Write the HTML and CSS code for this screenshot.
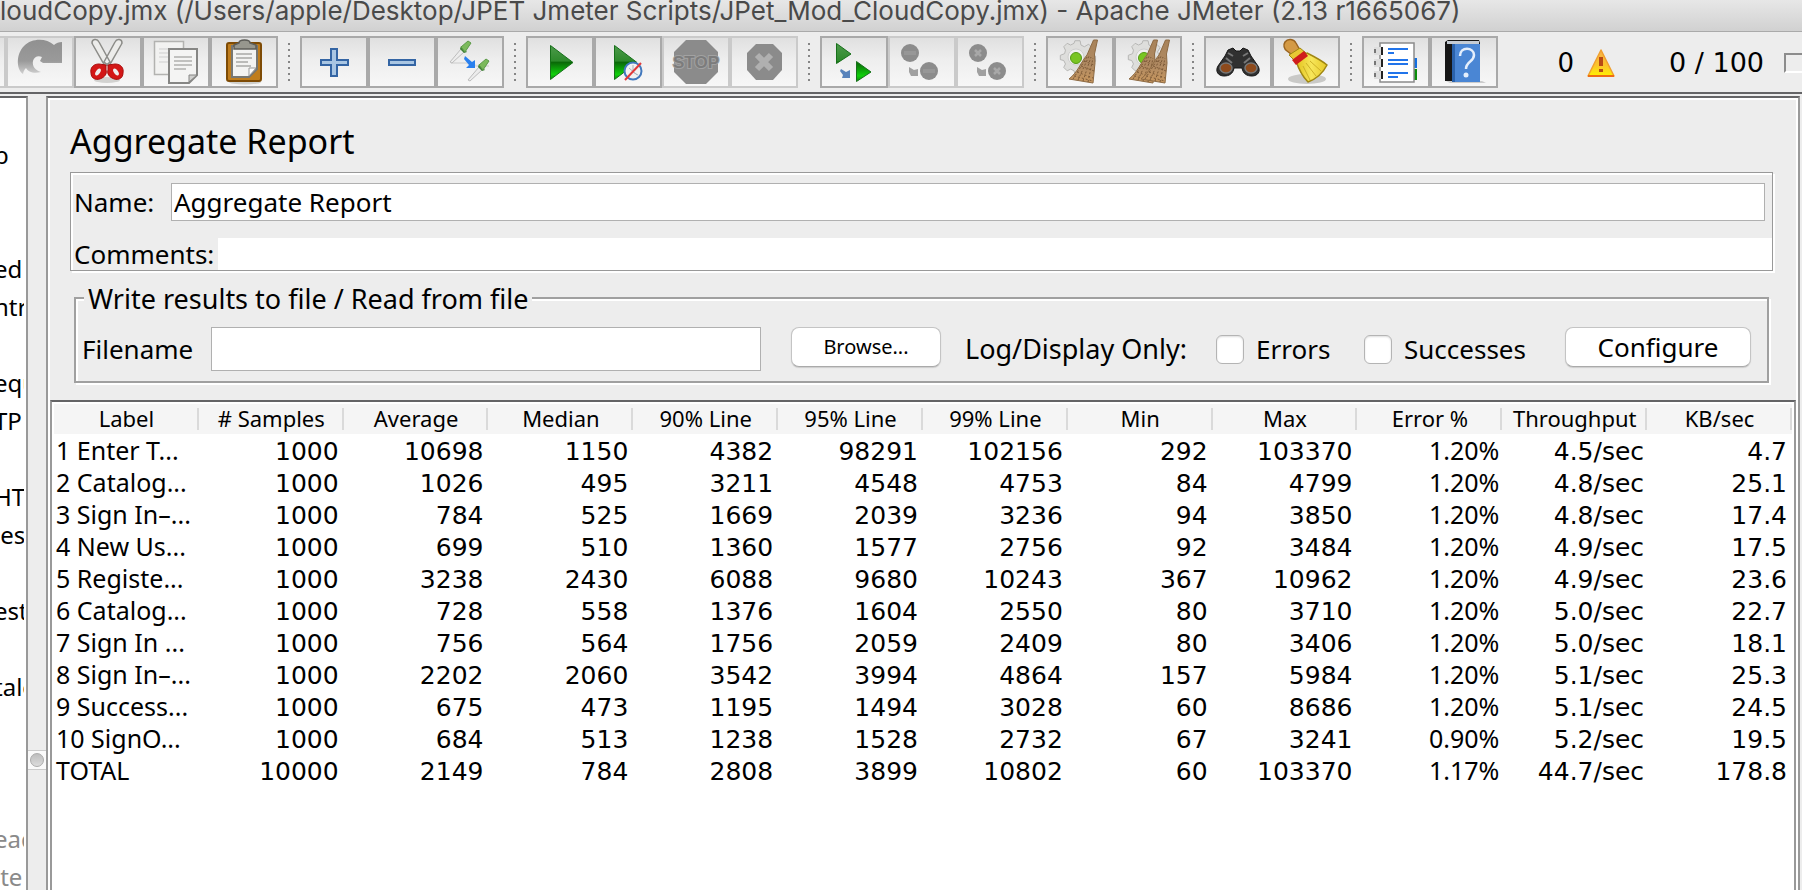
FILE: index.html
```html
<!DOCTYPE html>
<html lang="en">
<head>
<meta charset="utf-8">
<title>Apache JMeter (2.13 r1665067)</title>
<link rel="stylesheet" href="styles.css">
</head>
<body>
<svg class="defs" aria-hidden="true">
  <defs>
    <linearGradient id="green" x1="0" y1="0" x2="0" y2="1"><stop offset="0" stop-color="#4d9a4b"/><stop offset=".45" stop-color="#2e8a2c"/><stop offset=".5" stop-color="#0a6a08"/><stop offset=".85" stop-color="#0fd00b"/><stop offset="1" stop-color="#0a8a08"/></linearGradient>
    <linearGradient id="straw" x1="0" y1="0" x2="0" y2="1"><stop offset="0" stop-color="#a8835a"/><stop offset=".6" stop-color="#b08a62"/><stop offset="1" stop-color="#c9985f"/></linearGradient>
    <linearGradient id="warn" x1="0" y1="0" x2="0" y2="1"><stop offset="0" stop-color="#f9b04a"/><stop offset=".6" stop-color="#fbc52a"/><stop offset="1" stop-color="#fff200"/></linearGradient>
    <linearGradient id="fade" x1="0" y1="0" x2="0" y2="1"><stop offset="0" stop-color="#909090"/><stop offset=".6" stop-color="#9a9a9a"/><stop offset="1" stop-color="#d4d4d4"/></linearGradient>
    <linearGradient id="gold" x1="0" y1="0" x2="1" y2="0"><stop offset="0" stop-color="#e2c21c"/><stop offset=".5" stop-color="#f7e65a"/><stop offset="1" stop-color="#e6c826"/></linearGradient>
    <g id="gear"><path d="M22 2h6l1 5 4 2 5-3 4 4-3 5 2 4 5 1v6l-5 1-2 4 3 5-4 3-5-3-4 2-1 3h-6l-1-4-4-2-4 2-4-4 2-4-2-4-4-1v-5l5-2 1-4-2-4 4-4 4 2 4-2z" transform="translate(0 1) scale(.86)" fill="#dededc" stroke="#b0b0ae" stroke-width="1"/><circle cx="20" cy="19" r="8" fill="#f0f0ee" stroke="#cfcfcf"/><circle cx="20" cy="20" r="5.500" fill="#79c522" stroke="#559a14"/></g>
    <g id="brush"><path d="M45.500 2h4L46.500 16l.5 9-2 20-24-4c9-7 12-17 18-24z" fill="url(#straw)" stroke="#8d6a43" stroke-width="1"/><path d="M25 41l14-22M30 42l11-24M35 43l8-24M40 44l5-24M29 34l16 6M33 28l13 5M26 38l19 5M36 23l10 4" stroke="#7c5a38" stroke-width="1" stroke-dasharray="2 2" fill="none"/></g>
    <g id="dropper"><path d="M1 22L12 9l3 3L3 23z" fill="#ececec" stroke="#bdbdbd" stroke-width="1"/><path d="M12 6l6 6 -3 1-4-4z" fill="#3f7f35"/><path d="M12 7l7-6 3 2-6 9z" fill="#7cba5c" stroke="#5c9a48" stroke-width="1"/></g>
  </defs>
</svg>

<header class="titlebar"><h1 class="window-title">loudCopy.jmx (/Users/apple/Desktop/JPET Jmeter Scripts/JPet_Mod_CloudCopy.jmx) - Apache JMeter (2.13 r1665067)</h1></header>

<div class="toolbar" role="toolbar">
  <div class="tool-groups">
    <div class="tools">
      <button class="tool" disabled aria-label="Undo"></button>
      <button class="tool" disabled aria-label="Redo"><svg viewBox="0 0 64 48"><path d="M15 36C8 31 8 16 16 8 24 0 38 0 46 7c2-2 5-3 8-3v21H35l-3-2 2-4c-4-2-8 0-9 4-1 5 2 9 8 11-7 2-13 0-15-4-2 2-3 4-3 7z" fill="url(#fade)"/></svg></button>
      <button class="tool" aria-label="Cut"><svg viewBox="0 0 64 48"><ellipse cx="31" cy="42" rx="13" ry="3" fill="#d2d2d0"/><path d="M16 5c0-4 5-5 7-1l11 20-5 4-12-21zM46 5c0-4-5-5-7-1L28 24l5 4L45 7z" fill="#ececea" stroke="#8c8c88" stroke-width="1.500"/><path d="M30 27l-7-1c-6 0-9 4-8 9 0 6 6 8 11 5 4-2 5-6 4-8zM32 27l7-1c6 0 9 4 8 9 0 6-6 8-11 5-4-2-5-6-4-8z" fill="#d31717" stroke="#a90d0d"/><ellipse cx="22" cy="34" rx="2" ry="4" transform="rotate(35 22 34)" fill="#eee"/><ellipse cx="40" cy="34" rx="2" ry="4" transform="rotate(-35 40 34)" fill="#eee"/></svg></button>
      <button class="tool" aria-label="Copy"><svg viewBox="0 0 64 48"><path d="M10.500 3.500h29v33h-29z" fill="#f2f2f1" stroke="#b2b2b0" stroke-width="1.500"/><path d="M15 11h18M15 15h18M15 19h14M15 24h14" stroke="#cfcfcf"/><path d="M25 11h28v26l-8 8H25z" fill="#f4f4f3" stroke="#868684" stroke-width="2"/><path d="M30 19h18M30 23h18M30 27h18M30 31h12" stroke="#b0b0ae" stroke-width="1.500"/><path d="M45 44v-7h8z" fill="#d0d0ce" stroke="#868684"/></svg></button>
      <button class="tool" aria-label="Paste"><svg viewBox="0 0 64 48"><ellipse cx="33" cy="44" rx="16" ry="2.500" fill="#cfcfcc"/><rect x="15" y="5" width="34" height="38" rx="2" fill="#c07d1d" stroke="#7e4b05" stroke-width="2"/><path d="M20 8h25v23l-8 8H20z" fill="#f3f3f2" stroke="#777773" stroke-width="2"/><path d="M24 16h16M24 20h16M24 24h12M24 28h15" stroke="#a9a9a7" stroke-width="1.500"/><path d="M37 38v-8h7z" fill="#fff" stroke="#999"/><path d="M22 11V7l5-2c0-4 11-4 11 0l6 2v4z" fill="#97978e" stroke="#5d5d58" stroke-width="1.500"/></svg></button>
    </div>
    <span class="dots"></span>
    <div class="tools">
      <button class="tool" aria-label="Expand all"><svg viewBox="0 0 64 48"><path d="M29 11h6v11h11v5H35v11h-6V27H19v-5h10z" fill="#a9c6e3" stroke="#3465a4" stroke-width="2"/></svg></button>
      <button class="tool" aria-label="Collapse all"><svg viewBox="0 0 64 48"><rect x="19" y="22" width="26" height="5" fill="#a9c6e3" stroke="#3465a4" stroke-width="2"/></svg></button>
      <button class="tool" aria-label="Toggle"><svg viewBox="0 0 64 48"><path d="M13 25h16l10 3h12" stroke="#ddd" stroke-width="2" fill="none"/><use href="#dropper" x="11" y="2"/><use href="#dropper" x="29" y="20"/><path d="M27 18l7 6 3-2v8h-9l3-3-5-6z" fill="#2a80ee"/></svg></button>
    </div>
    <span class="dots"></span>
    <div class="tools">
      <button class="tool" aria-label="Start"><svg viewBox="0 0 64 48"><path d="M22.500 7.500v34L45 24.500z" fill="url(#green)" stroke="#17701a"/></svg></button>
      <button class="tool" aria-label="Start no pauses"><svg viewBox="0 0 64 48"><path d="M18.500 7.500v34L41 24.500z" fill="url(#green)" stroke="#17701a"/><circle cx="37" cy="33" r="8.500" fill="#f2f2f2" stroke="#4178bd" stroke-width="2"/><path d="M37 27v7l5 3M33 30l8 7" stroke="#aab4c0" fill="none"/><path d="M29 42l16-17" stroke="#e23a3a" stroke-width="2"/></svg></button>
      <button class="tool" disabled aria-label="Stop"><svg viewBox="0 0 64 48"><path d="M22 2h20l12 12v20L42 46H22L10 34V14z" fill="#8b8b8b"/><text x="32" y="30" class="stop-text">STOP</text></svg></button>
      <button class="tool" disabled aria-label="Shutdown"><svg viewBox="0 0 64 48"><path d="M24 6h17l9 9v17l-9 10H24l-9-10V15z" fill="#8b8b8b"/><path d="M25 17l14 14M39 17L25 31" stroke="#b0b0b0" stroke-width="6"/></svg></button>
    </div>
    <span class="dots"></span>
    <div class="tools">
      <button class="tool" aria-label="Remote start all"><svg viewBox="0 0 64 48"><path d="M14.500 5.500v20L29 16zM34.500 23.500v20L49 34z" fill="url(#green)" stroke="#17701a"/><path d="M19 31l5 3 4-2v8h-8l1-3-3-4z" fill="#3c6eb0" opacity=".85"/></svg></button>
      <button class="tool" disabled aria-label="Remote stop all"><svg viewBox="0 0 64 48"><circle cx="20" cy="15" r="9" fill="#8c8c8c"/><circle cx="39" cy="33" r="9" fill="#8c8c8c"/><path d="M14 15h12M33 33h12" stroke="#979797" stroke-width="4"/><path d="M19 29l5 3 4-1v7h-7l-2-4z" fill="#a0a0a0"/></svg></button>
      <button class="tool" disabled aria-label="Remote shutdown all"><svg viewBox="0 0 64 48"><circle cx="20" cy="15" r="9" fill="#8c8c8c"/><circle cx="39" cy="33" r="9" fill="#8c8c8c"/><path d="M17 12l6 6M23 12l-6 6M36 30l6 6M42 30l-6 6" stroke="#a8a8a8" stroke-width="2.500"/><path d="M19 29l5 3 4-1v7h-7l-2-4z" fill="#a0a0a0"/></svg></button>
    </div>
    <span class="dots"></span>
    <div class="tools">
      <button class="tool" aria-label="Clear"><svg viewBox="0 0 64 48"><use href="#gear" x="8"/><use href="#brush"/></svg></button>
      <button class="tool" aria-label="Clear all"><svg viewBox="0 0 64 48"><use href="#gear" x="8"/><use href="#brush" x="-8"/><use href="#brush" x="4"/></svg></button>
    </div>
    <span class="dots"></span>
    <div class="tools">
      <button class="tool" aria-label="Search"><svg viewBox="0 0 64 48"><path d="M22 12l5-2 3 3h4l3-3 5 2 3 6 7 10c3 5 0 10-6 10-5 0-9-2-10-8h-8c-1 6-5 8-10 8-6 0-9-5-6-10l7-10z" fill="#303030" stroke="#161616"/><path d="M22 15l5 3M42 15l-5 3M20 20l6 5M44 20l-6 5" stroke="#777" stroke-width="2"/><ellipse cx="20" cy="30" rx="6" ry="5" fill="#8d4a1c" stroke="#777" stroke-width="1.500"/><ellipse cx="45" cy="30" rx="6" ry="5" fill="#8d4a1c" stroke="#777" stroke-width="1.500"/></svg></button>
      <button class="tool" aria-label="Reset search"><svg viewBox="0 0 64 48"><ellipse cx="33" cy="41" rx="19" ry="5" fill="#c9c9c7"/><path d="M11 4c3-4 9-3 11 1l5 9-6 5-8-6c-3-2-4-6-2-9z" fill="#d49a45" stroke="#9a6420" stroke-width="1.500"/><path d="M15 17l11-7 6 5-10 9z" fill="#e8c834" stroke="#a08712"/><path d="M22 23l11-8c8 4 14 7 20 12-4 8-11 14-19 17-5-5-9-12-12-21z" fill="url(#gold)" stroke="#a08712" stroke-width="1.500"/><path d="M29 28l7 14M32 25l10 13M36 23l11 10" stroke="#cdb127"/><path d="M18 22l12-9 4 5-12 9z" fill="#cf1c1c"/></svg></button>
    </div>
    <span class="dots"></span>
    <div class="tools">
      <button class="tool" aria-label="Function helper"><svg viewBox="0 0 64 48"><path d="M48 20h5v10h-5z" fill="#1670e0"/><path d="M48 31h5v11h-5z" fill="#0b8d0b"/><rect x="16" y="5" width="34" height="39" fill="#fff" stroke="#8b8b8b" stroke-width="1.500"/><path d="M24 11h20M24 22h20M24 26h20M24 35h20" stroke="#2174ea" stroke-width="2"/><path d="M24 15h6M24 39h10" stroke="#2174ea" stroke-width="2"/><path d="M10 9h8v8h-8zM10 21h8v8h-8zM10 33h8v8h-8z" fill="#ddd"/><path d="M11 11v4M11 23v4M11 35v4" stroke="#777" stroke-width="2"/><path d="M18 9v8M18 21v8M18 33v8" stroke="#222" stroke-width="2"/></svg></button>
      <button class="tool" aria-label="Help"><svg viewBox="0 0 64 48"><path d="M14 43h36l4 2H18z" fill="#ccc"/><path d="M13 4l3-2h31l1 3v38H13z" fill="#161616"/><path d="M15 3h32v3H15z" fill="#c5ccd4"/><path d="M20 6h28v38H20z" fill="#4a86d4"/><path d="M20 6h3v38h-3z" fill="#2b62ab"/><path d="M28 18c0-10 14-9 14-1 0 7-8 6-8 14" stroke="#e5effc" stroke-width="2.500" fill="none"/><circle cx="34" cy="37" r="2.500" fill="#e5effc"/></svg></button>
    </div>
  </div>
  <div class="status">
    <span class="errors">0</span>
    <svg class="warning" viewBox="0 0 28 28"><path d="M14 1l13 26H1z" fill="url(#warn)" stroke="#f0a030" stroke-width="1.500" stroke-linejoin="round"/><path d="M1 27h26" stroke="#ee6c14" stroke-width="2"/><path d="M12 8h4v9h-4zM12 20h4v3h-4z" fill="#b84a14"/></svg>
    <span class="threads">0 / 100</span>
    <span class="indicator"></span>
  </div>
</div>

<div class="workspace">
  <nav class="tree">
    <ul class="tree-list">
      <li>p</li><li></li><li></li><li>ed</li><li>ntr</li><li></li><li>equ</li><li>TP I</li><li></li><li>HTT</li><li>&nbsp;es</li><li></li><li>est</li><li></li><li>talo</li><li></li><li></li><li></li><li class="off">ead</li><li class="off">lte</li>
    </ul>
  </nav>
  <div class="divider"><span class="grip"></span></div>
  <main class="panel">
    <h2 class="heading">Aggregate Report</h2>
    <div class="ident">
      <div class="name-row"><label class="name-label" for="name">Name:</label><input class="name-input" id="name" value="Aggregate Report"></div>
      <div class="comment-row"><label class="comment-label" for="comments">Comments:</label><input class="comment-input" id="comments"></div>
    </div>
    <fieldset class="file-box">
      <legend class="legend">Write results to file / Read from file</legend>
      <div class="file-row">
        <label class="file-label" for="file">Filename</label>
        <input class="file-input" id="file">
        <button class="btn browse">Browse...</button>
        <span class="log-label">Log/Display Only:</span>
        <label class="check errors-check"><input type="checkbox">Errors</label>
        <label class="check success-check"><input type="checkbox">Successes</label>
        <button class="btn configure">Configure</button>
      </div>
    </fieldset>
    <div class="scroller">
      <table class="report">
        <thead><tr><th>Label</th><th># Samples</th><th>Average</th><th>Median</th><th>90% Line</th><th>95% Line</th><th>99% Line</th><th>Min</th><th>Max</th><th>Error %</th><th>Throughput</th><th>KB/sec</th></tr></thead>
        <tbody>
          <tr><td>1 Enter T...</td><td>1000</td><td>10698</td><td>1150</td><td>4382</td><td>98291</td><td>102156</td><td>292</td><td>103370</td><td class="pct">1.20%</td><td class="rate">4.5/sec</td><td>4.7</td></tr>
          <tr><td>2 Catalog...</td><td>1000</td><td>1026</td><td>495</td><td>3211</td><td>4548</td><td>4753</td><td>84</td><td>4799</td><td class="pct">1.20%</td><td class="rate">4.8/sec</td><td>25.1</td></tr>
          <tr><td>3 Sign In–...</td><td>1000</td><td>784</td><td>525</td><td>1669</td><td>2039</td><td>3236</td><td>94</td><td>3850</td><td class="pct">1.20%</td><td class="rate">4.8/sec</td><td>17.4</td></tr>
          <tr><td>4 New Us...</td><td>1000</td><td>699</td><td>510</td><td>1360</td><td>1577</td><td>2756</td><td>92</td><td>3484</td><td class="pct">1.20%</td><td class="rate">4.9/sec</td><td>17.5</td></tr>
          <tr><td>5 Registe...</td><td>1000</td><td>3238</td><td>2430</td><td>6088</td><td>9680</td><td>10243</td><td>367</td><td>10962</td><td class="pct">1.20%</td><td class="rate">4.9/sec</td><td>23.6</td></tr>
          <tr><td>6 Catalog...</td><td>1000</td><td>728</td><td>558</td><td>1376</td><td>1604</td><td>2550</td><td>80</td><td>3710</td><td class="pct">1.20%</td><td class="rate">5.0/sec</td><td>22.7</td></tr>
          <tr><td>7 Sign In ...</td><td>1000</td><td>756</td><td>564</td><td>1756</td><td>2059</td><td>2409</td><td>80</td><td>3406</td><td class="pct">1.20%</td><td class="rate">5.0/sec</td><td>18.1</td></tr>
          <tr><td>8 Sign In–...</td><td>1000</td><td>2202</td><td>2060</td><td>3542</td><td>3994</td><td>4864</td><td>157</td><td>5984</td><td class="pct">1.20%</td><td class="rate">5.1/sec</td><td>25.3</td></tr>
          <tr><td>9 Success...</td><td>1000</td><td>675</td><td>473</td><td>1195</td><td>1494</td><td>3028</td><td>60</td><td>8686</td><td class="pct">1.20%</td><td class="rate">5.1/sec</td><td>24.5</td></tr>
          <tr><td>10 SignO...</td><td>1000</td><td>684</td><td>513</td><td>1238</td><td>1528</td><td>2732</td><td>67</td><td>3241</td><td class="pct">0.90%</td><td class="rate">5.2/sec</td><td>19.5</td></tr>
          <tr><td>TOTAL</td><td>10000</td><td>2149</td><td>784</td><td>2808</td><td>3899</td><td>10802</td><td>60</td><td>103370</td><td class="pct">1.17%</td><td class="rate">44.7/sec</td><td>178.8</td></tr>
        </tbody>
      </table>
    </div>
  </main>
</div>
</body>
</html>
```
FILE: styles.css
```css
* { box-sizing: border-box; }
body {
  margin: 0;
  height: 100vh;
  display: flex;
  flex-direction: column;
  overflow: hidden;
  background: #ededed;
  color: #000;
  font: 26px/32px "Noto Sans", "Open Sans", sans-serif;
}
button, input { font: inherit; color: inherit; margin: 0; }
.defs { position: absolute; width: 0; height: 0; }

.titlebar {
  height: 32px;
  flex: none;
  overflow: hidden;
  background: linear-gradient(#e7e7e7, #d1d1d1);
  border-bottom: 1px solid #aaa;
}
.window-title {
  margin: 0;
  font: 26px/22px Inter, Roboto, sans-serif;
  color: #4a4a4a;
  white-space: nowrap;
}

.toolbar {
  flex: none;
  display: flex;
  align-items: center;
  justify-content: space-between;
  height: 62px;
  overflow: hidden;
  border-bottom: 2px solid #646466;
}
.tool-groups { display: flex; align-items: center; margin-left: -62px; }
.tools { display: flex; }
.tool {
  width: 68px;
  height: 52px;
  padding: 0;
  border: 2px solid #a9a9a9;
  background: linear-gradient(#e0e0e0, #eee 45%, #f7f7f7);
}
.tool:disabled { border-color: #cacaca; }
.tool svg { display: block; width: 100%; height: 100%; }
.stop-text {
  font: bold 17px "Liberation Sans", sans-serif;
  text-anchor: middle;
  fill: #7c7c7c;
  stroke: #a2a2a2;
  stroke-width: 2px;
  paint-order: stroke;
}
.dots {
  width: 2px;
  height: 38px;
  margin: 0 10px;
  background: repeating-linear-gradient(#858585 0 2px, transparent 2px 6px);
}
.status {
  display: flex;
  align-items: center;
  padding-top: 2px;
  font-family: "DejaVu Sans", sans-serif;
}
.errors { margin-right: 13px; }
.warning { width: 28px; height: 28px; margin-right: 54px; }
.threads { margin-right: 20px; font-size: 27px; }
.indicator {
  width: 18px;
  height: 20px;
  border: 2px solid #8c8c8c;
  border-right: 0;
  border-bottom-color: #fff;
}

.workspace { flex: 1; min-height: 0; display: flex; padding: 2px 2px 0 0; }
.tree {
  width: 28px;
  flex: none;
  padding: 38px 2px 0 0;
  background: #fff;
  border-top: 2px solid #646466;
  border-right: 2px solid #999;
}
.tree-list {
  list-style: none;
  margin: 0;
  padding: 0;
  overflow: hidden;
  font-size: 24px;
}
.tree-list li { height: 38px; line-height: 38px; margin-left: -6px; white-space: nowrap; }
.tree-list .off { color: #8a8a8a; }
.divider { width: 18px; flex: none; padding-top: 654px; }
.grip {
  display: flex;
  align-items: center;
  justify-content: center;
  height: 20px;
  background: #fafafa;
  border: solid #ccc;
  border-width: 1px 0;
}
.grip::before {
  content: "";
  width: 12px;
  height: 12px;
  border-radius: 50%;
  background: linear-gradient(#bdbdbd, #dcdcdc);
  border: 1px solid #ababab;
}

.panel {
  flex: 1;
  min-width: 0;
  display: flex;
  flex-direction: column;
  padding: 19px 2px 0 2px;
  border: solid #999;
  border-width: 2px 2px 0;
  border-top-color: #646466;
  box-shadow: inset 2px 2px 0 #fff, inset -2px 0 0 #fff;
}
.heading { margin: 0 20px 7px; font-size: 34px; line-height: 48px; font-weight: 400; }
.ident {
  margin: 0 23px 0 20px;
  padding-top: 10px;
  border: 1px solid #999;
  box-shadow: inset 2px 2px 0 #fff, 2px 2px 0 #fff;
}
.name-row { display: flex; align-items: center; margin: 0 7px 17px 3px; }
.name-label { width: 97px; }
.name-input {
  flex: 1;
  min-width: 0;
  height: 38px;
  padding: 0 2px;
  border: 1px solid #b0b0b0;
  background: #fff;
}
.comment-row { display: flex; padding-left: 3px; }
.comment-label { width: 144px; white-space: nowrap; }
.comment-input { flex: 1; min-width: 0; height: 32px; padding: 0 3px; border: 0; background: #fff; }

.file-box {
  min-width: 0;
  margin: 10px 27px 17px 24px;
  padding: 12px 16px 10px 6px;
  border: 2px solid #a0a0a0;
  box-shadow: inset 2px 2px 0 #fff, 2px 2px 0 #fff;
}
.legend { margin-left: 2px; padding: 2px 4px 0; background: #ededed; font-size: 27px; }
.file-row { display: flex; align-items: center; white-space: nowrap; }
.file-label { width: 129px; }
.file-input {
  flex: 1;
  min-width: 0;
  height: 44px;
  border: 1px solid #b0b0b0;
  background: #fff;
}
.btn {
  height: 40px;
  padding: 0;
  margin-bottom: 4px;
  border: 1px solid #c4c4c4;
  border-bottom-color: #aaa;
  border-radius: 8px;
  background: #fff;
  box-shadow: 0 1px 1px #ccc;
}
.browse { width: 150px; margin-left: 30px; margin-right: 24px; font-size: 20px; }
.configure { width: 186px; }
.log-label { width: 251px; font-size: 27px; }
.check { display: flex; align-items: center; gap: 12px; }
.check input {
  appearance: none;
  width: 28px;
  height: 29px;
  border: 1px solid #b4b4b4;
  border-radius: 6px;
  background: #fff;
  box-shadow: inset 0 1px 2px #ddd;
}
.errors-check { width: 148px; }
.success-check { width: 201px; }

.scroller {
  flex: 1;
  min-height: 0;
  overflow: hidden;
  padding: 2px 2px 0;
  background: #fff;
  border: solid #999;
  border-width: 2px 2px 0;
  border-top-color: #646466;
}
.report { width: 100%; table-layout: fixed; border-collapse: separate; border-spacing: 0; }
.report th {
  height: 31px;
  padding: 0 0 2px;
  border-bottom: 1px solid #fff;
  background: linear-gradient(#dadada, #dadada) right center / 2px 22px no-repeat #f5f5f5;
  font-size: 22px;
  font-weight: 400;
  line-height: 28px;
}
.report td {
  height: 32px;
  padding: 0 5px 0 2px;
  font: 25px/30px "DejaVu Sans", sans-serif;
  text-align: right;
  vertical-align: baseline;
  white-space: nowrap;
}
.report td:first-child, .report .pct { font-family: "Noto Sans", "Open Sans", sans-serif; }
.report td:first-child { text-align: left; }
.report .pct, .report .rate { padding-right: 3px; }
```
